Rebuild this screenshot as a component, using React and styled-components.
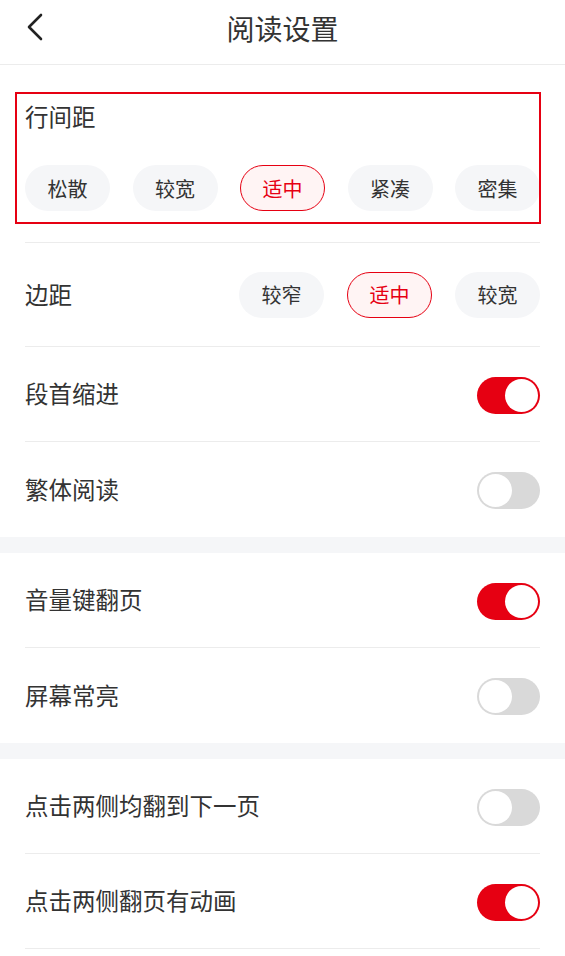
import React from "react";
import styled, { createGlobalStyle } from "styled-components";

const RED = "#e60012";

const Global = createGlobalStyle`
  html, body { margin: 0; padding: 0; background: #fff; }
  body { font-family: "Noto Sans CJK SC", "Noto Sans", sans-serif; color: #333; }
  * { box-sizing: border-box; }
`;

const Page = styled.div`
  width: 565px;
  min-height: 956px;
  background: #fff;
`;

const Header = styled.header`
  position: relative;
  height: 65px;
  border-bottom: 1px solid #ececec;
  display: flex;
  align-items: center;
  justify-content: center;
`;

const BackButton = styled.button`
  position: absolute;
  left: 20px;
  top: 10px;
  width: 30px;
  height: 34px;
  padding: 0;
  border: 0;
  background: transparent;
  display: flex;
  align-items: center;
  justify-content: center;
`;

const Title = styled.h1`
  margin: 0 0 9px;
  font-size: 28px;
  font-weight: 400;
  color: #333;
  line-height: 1;
`;

const Group = styled.section`
  padding: 0 25px;
  background: #fff;
`;

const Band = styled.div`
  height: 16px;
  background: #f5f6f8;
`;

const SpacingBlock = styled.div`
  position: relative;
  padding: 35px 0 31px;
  border-bottom: 1px solid #ececec;
`;

const Highlight = styled.div`
  position: absolute;
  left: -10px;
  top: 27px;
  width: 526px;
  height: 132px;
  border: 2px solid ${RED};
  pointer-events: none;
`;

const BlockTitle = styled.div`
  font-size: 23.5px;
  line-height: 32px;
  color: #333;
`;

const ChipRow = styled.div`
  margin-top: 33px;
  display: flex;
  justify-content: space-between;
`;

const ChipGroup = styled.div`
  display: flex;
  gap: 23px;
`;

const Chip = styled.div`
  width: 85px;
  height: 46px;
  border-radius: 23px;
  display: flex;
  align-items: center;
  justify-content: center;
  font-size: 20px;
  color: ${(p) => (p.$active ? RED : "#333")};
  background: ${(p) => (p.$active ? "#fff4f4" : "#f5f6f8")};
  border: ${(p) => (p.$active ? `1.5px solid ${RED}` : "1.5px solid transparent")};
`;

const Row = styled.div`
  height: ${(p) => p.$h || 95}px;
  display: flex;
  align-items: center;
  justify-content: space-between;
  border-bottom: ${(p) => (p.$last ? "none" : "1px solid #ececec")};
`;

const Label = styled.div`
  font-size: 23.5px;
  color: #333;
  line-height: 1;
`;

const Track = styled.div`
  width: 63px;
  height: 37px;
  border-radius: 19px;
  background: ${(p) => (p.$on ? RED : "#d9d9d9")};
  display: flex;
  align-items: center;
  justify-content: ${(p) => (p.$on ? "flex-end" : "flex-start")};
  padding: 0 2px;
  margin-top: 2px;
`;

const Knob = styled.div`
  width: 33px;
  height: 33px;
  border-radius: 50%;
  background: #fff;
`;

const Toggle = ({ on }) => (
  <Track $on={on}>
    <Knob />
  </Track>
);

const lineOptions = ["松散", "较宽", "适中", "紧凑", "密集"];
const marginOptions = ["较窄", "适中", "较宽"];

export default function App() {
  return (
    <Page>
      <Global />
      <Header>
        <BackButton aria-label="返回">
          <svg width="18" height="28" viewBox="0 0 18 28" fill="none">
            <path d="M15 2 L3 14 L15 26" stroke="#222" strokeWidth="2.6" strokeLinecap="round" strokeLinejoin="round" />
          </svg>
        </BackButton>
        <Title>阅读设置</Title>
      </Header>

      <Group>
        <SpacingBlock>
          <Highlight />
          <BlockTitle>行间距</BlockTitle>
          <ChipRow>
            {lineOptions.map((o) => (
              <Chip key={o} $active={o === "适中"}>{o}</Chip>
            ))}
          </ChipRow>
        </SpacingBlock>

        <Row $h={104}>
          <Label>边距</Label>
          <ChipGroup>
            {marginOptions.map((o) => (
              <Chip key={o} $active={o === "适中"}>{o}</Chip>
            ))}
          </ChipGroup>
        </Row>
        <Row>
          <Label>段首缩进</Label>
          <Toggle on />
        </Row>
        <Row $last>
          <Label>繁体阅读</Label>
          <Toggle />
        </Row>
      </Group>

      <Band />

      <Group>
        <Row>
          <Label>音量键翻页</Label>
          <Toggle on />
        </Row>
        <Row $last>
          <Label>屏幕常亮</Label>
          <Toggle />
        </Row>
      </Group>

      <Band />

      <Group>
        <Row>
          <Label>点击两侧均翻到下一页</Label>
          <Toggle />
        </Row>
        <Row>
          <Label>点击两侧翻页有动画</Label>
          <Toggle on />
        </Row>
      </Group>
    </Page>
  );
}
